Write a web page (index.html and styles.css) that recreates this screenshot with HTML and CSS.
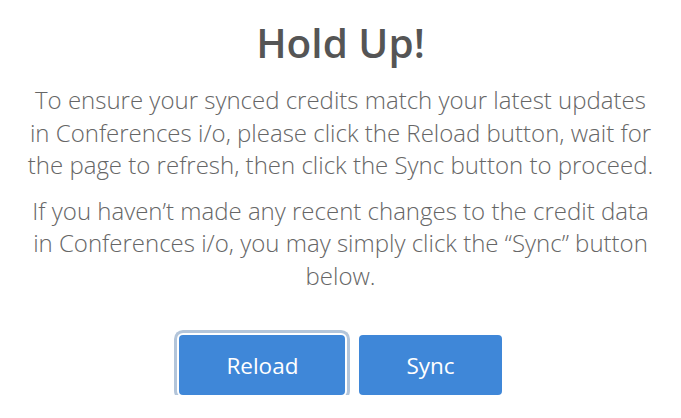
FILE: index.html
```html
<!DOCTYPE html>
<html>
<head>
<meta charset="utf-8">
<link rel="stylesheet" href="styles.css">
</head>
<body>
<div class="modal">
  <h1 class="title">Hold Up!</h1>
  <p class="msg">To ensure your synced credits match your latest updates in Conferences i/o, please click the Reload button, wait for the page to refresh, then click the Sync button to proceed.</p>
  <p class="msg">If you haven’t made any recent changes to the credit data in Conferences i/o, you may simply click the “Sync” button below.</p>
  <div class="actions">
    <button class="btn btn-focus">Reload</button>
    <button class="btn">Sync</button>
  </div>
</div>
</body>
</html>
```
FILE: styles.css
```css
html, body {
  margin: 0;
  padding: 0;
  background: #fff;
}
.modal {
  padding: 18px 23px 0;
  text-align: center;
  font-family: "Open Sans", "Liberation Sans", sans-serif;
}
.title {
  margin: 0 0 16px;
  font-size: 40.5px;
  line-height: 50px;
  font-weight: 600;
  color: #555555;
}
.msg {
  margin: 0 0 13px;
  font-size: 24px;
  line-height: 32.5px;
  font-weight: 300;
  color: #666666;
}
.actions {
  display: flex;
  justify-content: center;
  gap: 14px;
  margin-top: 43px;
}
.btn {
  font-family: "Open Sans", "Liberation Sans", sans-serif;
  font-size: 22.5px;
  font-weight: 400;
  color: #fff;
  background: #3f87d8;
  border: none;
  border-radius: 4px;
  height: 60px;
  padding: 0 47px;
  outline: none;
}
.btn-focus {
  box-shadow: 0 0 0 2px #fff, 0 0 0 5px #b3c5da;
  border-radius: 4px;
}
```
